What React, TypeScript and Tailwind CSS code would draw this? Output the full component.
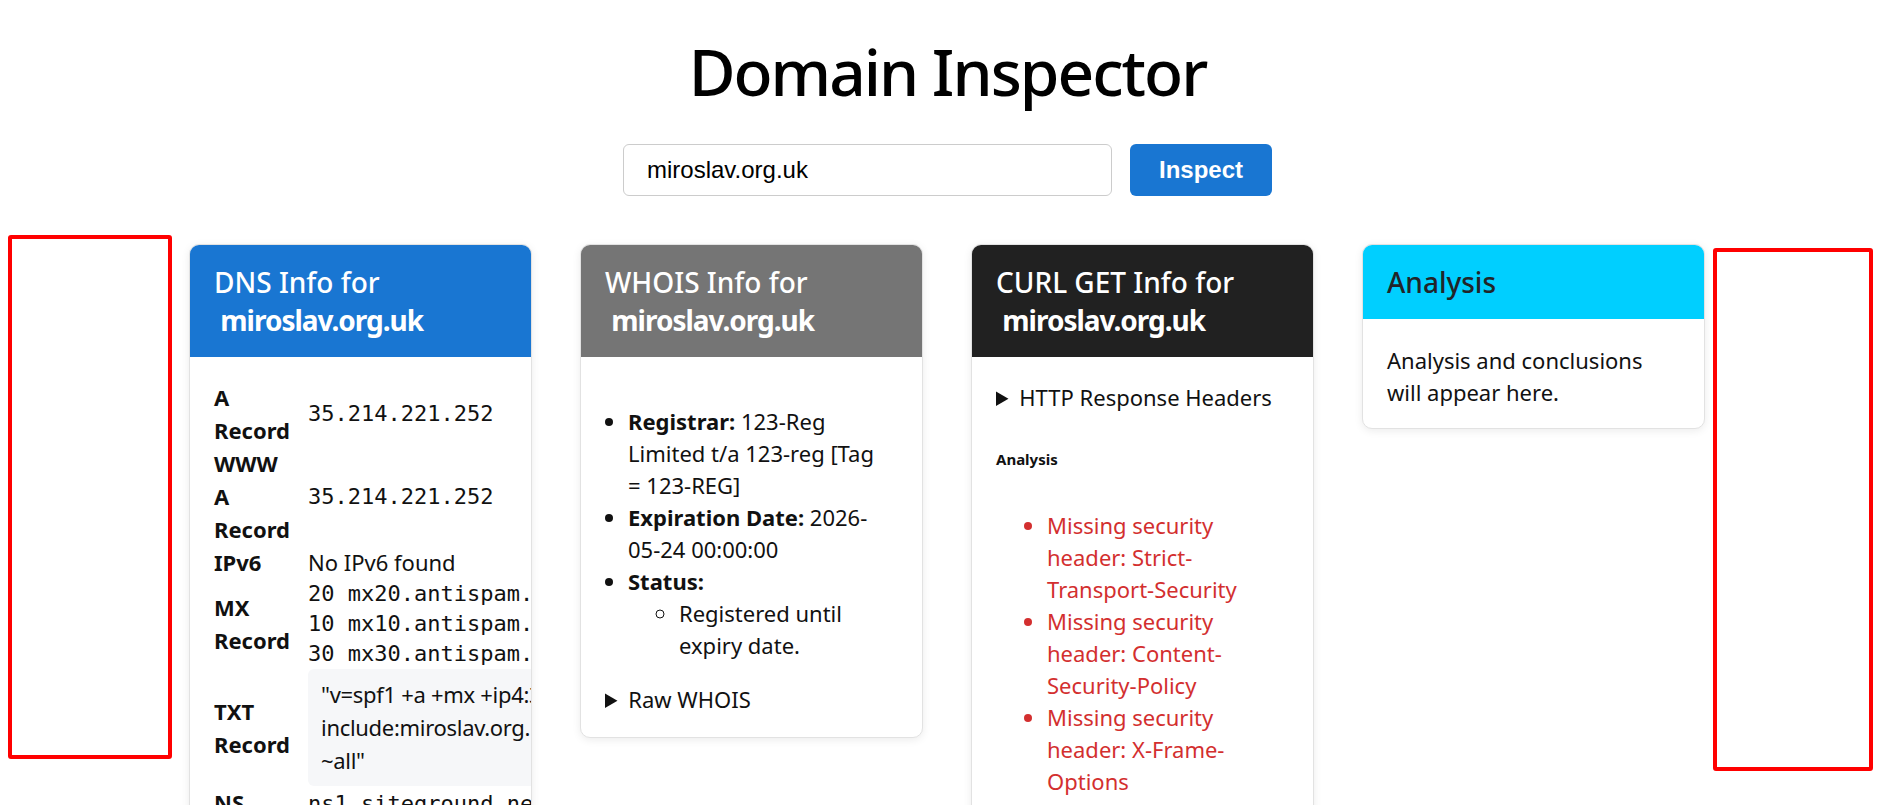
import React from "react";

type DnsRow = {
  label: string;
  mono?: string[];
  text?: string;
  txt?: string[];
};

const dnsRows: DnsRow[] = [
  { label: "A Record", mono: ["35.214.221.252"] },
  { label: "WWW A Record", mono: ["35.214.221.252"] },
  { label: "IPv6", text: "No IPv6 found" },
  {
    label: "MX Record",
    mono: [
      "20 mx20.antispam.mailspamprotection.com.",
      "10 mx10.antispam.mailspamprotection.com.",
      "30 mx30.antispam.mailspamprotection.com.",
    ],
  },
  {
    label: "TXT Record",
    txt: [
      '"v=spf1 +a +mx +ip4:35.214.221.252',
      "include:miroslav.org.uk.spf.auto.dnssmarthost.net",
      '~all"',
    ],
  },
  { label: "NS Record", mono: ["ns1.siteground.net.", "ns2.siteground.net."] },
  { label: "SOA Record", mono: ["ns1.siteground.net. root.c7.sgvps.net."] },
];

const missingHeaders = [
  "Strict-Transport-Security",
  "Content-Security-Policy",
  "X-Frame-Options",
  "X-Content-Type-Options",
  "Referrer-Policy",
];

function Card({
  title,
  domain,
  headerClass,
  children,
}: {
  title: string;
  domain?: string;
  headerClass: string;
  children: React.ReactNode;
}) {
  return (
    <div className="w-[343px] shrink-0 overflow-hidden rounded-[10px] border border-[#e2e2e2] bg-white shadow-[0_2px_8px_rgba(0,0,0,0.08)]">
      <div className={`px-[24px] py-[18px] text-[28px] leading-[38px] font-medium ${headerClass}`}>
        <div>{title}</div>
        {domain && <div className="font-bold tracking-[-1px]">{"\u00a0" + domain}</div>}
      </div>
      {children}
    </div>
  );
}

// DNS records table, values overflow the card and get clipped
function DnsCard({ domain }: { domain: string }) {
  return (
    <Card title="DNS Info for" domain={domain} headerClass="bg-[#1976d2] text-white">
      <div className="pt-[24px] pl-[24px] pb-[24px]">
        {dnsRows.map((row) => (
          <div key={row.label} className="flex items-center">
            <div className="w-[76px] mr-[18px] shrink-0 font-bold leading-[33px]">{row.label}</div>
            {row.mono && (
              <div className="font-['DejaVu_Sans_Mono',monospace] text-[22px] leading-[30px] whitespace-pre">
                {row.mono.join("\n")}
              </div>
            )}
            {row.text && <div className="leading-[33px] whitespace-nowrap">{row.text}</div>}
            {row.txt && (
              <div className="rounded-[6px] bg-[#f6f7f9] px-[13px] py-[9px] leading-[33px] whitespace-pre tracking-[-0.3px]">
                {row.txt.join("\n")}
              </div>
            )}
          </div>
        ))}
      </div>
    </Card>
  );
}

function WhoisCard({ domain }: { domain: string }) {
  return (
    <Card title="WHOIS Info for" domain={domain} headerClass="bg-[#757575] text-white">
      <div className="px-[24px] pt-[48px] pb-[22px] leading-[32px]">
        <ul className="list-disc pl-[23px] pr-[8px] mb-[22px]">
          <li>
            <b>Registrar:</b> 123-Reg Limited t/a 123-reg [Tag = 123-REG]
          </li>
          <li>
            <b>Expiration Date:</b> 2026-05-24 00:00:00
          </li>
          <li>
            <b>Status:</b>
            <ul className="list-[circle] pl-[51px]">
              <li>Registered until expiry date.</li>
            </ul>
          </li>
        </ul>
        <details>
          <summary className="cursor-pointer">Raw WHOIS</summary>
        </details>
      </div>
    </Card>
  );
}

function CurlCard({ domain }: { domain: string }) {
  return (
    <Card title="CURL GET Info for" domain={domain} headerClass="bg-[#212121] text-white">
      <div className="px-[24px] pt-[24px] pb-[24px] leading-[32px]">
        <details>
          <summary className="cursor-pointer">HTTP Response Headers</summary>
        </details>
        <h6 className="mt-[36px] text-[15px] leading-[20px] font-bold">Analysis</h6>
        <ul className="mt-[40px] list-disc pl-[51px] text-[#d32f2f]">
          {missingHeaders.map((h) => (
            <li key={h}>Missing security header: {h}</li>
          ))}
        </ul>
      </div>
    </Card>
  );
}

function App() {
  const domain = "miroslav.org.uk";

  return (
    <div className="min-h-screen bg-white text-[22px] text-[#111] font-['Noto_Sans',sans-serif]">
      <h1 className="pt-[40px] text-center text-[64px] leading-[64px] font-medium tracking-[-2px] text-black">
        Domain Inspector
      </h1>

      <div className="mt-[40px] flex justify-center gap-[18px] font-['Liberation_Sans',Arial,sans-serif]">
        <input
          className="h-[52px] w-[489px] rounded-[6px] border border-[#cccccc] px-[23px] text-[24px] text-black outline-none"
          defaultValue={domain}
        />
        <button
          type="button"
          className="h-[52px] w-[142px] rounded-[6px] bg-[#1976d2] text-[24px] font-bold text-white"
        >
          Inspect
        </button>
      </div>

      <div className="mt-[39px] flex items-start pl-[8px]">
        <div className="h-[524px] w-[164px] shrink-0 rounded-[3px] border-[4px] border-[#ff0000]" />
        <div className="ml-[17px] mt-[9px] flex items-start gap-[48px]">
          <DnsCard domain={domain} />
          <WhoisCard domain={domain} />
          <CurlCard domain={domain} />
          <Card title="Analysis" headerClass="bg-[#00cfff] text-[#212529]">
            <div className="px-[24px] pt-[25px] pb-[20px] leading-[32px]">
              Analysis and conclusions will appear here.
            </div>
          </Card>
        </div>
        <div className="ml-[8px] mt-[13px] h-[523px] w-[160px] shrink-0 rounded-[3px] border-[4px] border-[#ff0000]" />
      </div>
    </div>
  );
}

export default App;
